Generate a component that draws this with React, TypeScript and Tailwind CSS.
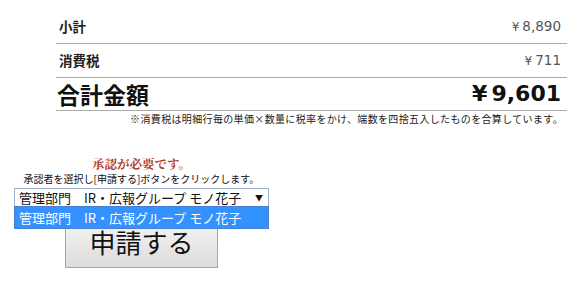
import React from 'react';

const jp = "font-['Noto_Sans_CJK_JP',sans-serif]";
const num = "font-['DejaVu_Sans','Noto_Sans_CJK_JP',sans-serif]";

const Row: React.FC<{ label: string; value: string; h: string }> = ({ label, value, h }) => (
  <div className={`flex items-center justify-between border-b border-[#aaa] ${h}`}>
    <span className={`${jp} pl-[3px] text-[13.5px] font-bold text-[#222]`}>{label}</span>
    <span className={`${num} pr-[6px] text-[13.5px] text-[#555]`}>
      <span className="mr-[3px] text-[12px]">¥</span>
      {value}
    </span>
  </div>
);

export default function App() {
  const approver = '管理部門　IR・広報グループ モノ花子';

  return (
    <div className="h-[289px] w-[572px] overflow-hidden bg-white">
      <div className="ml-[56px] w-[511px] pt-[9px]">
        <Row label="小計" value="8,890" h="h-[35px]" />
        <Row label="消費税" value="711" h="h-[34px]" />
        <div className="flex h-[33px] items-center justify-between border-b border-[#aaa]">
          <span className={`${jp} pl-[1px] text-[23px] font-bold leading-none text-[#111]`}>合計金額</span>
          <span className={`${num} pr-[6px] text-[22px] font-bold leading-none text-[#111]`}>
            <span className="mr-[4px]">¥</span>9,601
          </span>
        </div>
        <p className={`${jp} mt-[1px] pr-[4px] text-right text-[10px] leading-[13px] tracking-[0.35px] text-[#222]`}>
          ※消費税は明細行毎の単価×数量に税率をかけ、端数を四捨五入したものを合算しています。
        </p>
      </div>

      <div className="mt-[32px] flex w-[283px] flex-col items-center">
        <p className={`font-['Noto_Serif_CJK_JP','Noto_Sans_CJK_JP',serif] text-[12.5px] font-bold leading-[15px] text-[#b23a24]`}>
          承認が必要です。
        </p>
        <p className={`${jp} text-[10px] leading-[14px] text-[#111]`}>
          承認者を選択し[申請する]ボタンをクリックします。
        </p>

        <div className="relative mt-[2px] w-[255px]">
          <div className={`${jp} flex h-[19px] items-center justify-between border border-[#9fb0cf] bg-white pl-[4px] pr-[5px] text-[13px] leading-none text-[#111]`}>
            <span>{approver}</span>
            <span className="text-[8px]">▼</span>
          </div>
          <div className={`${jp} absolute left-0 top-[18px] z-10 flex h-[23px] w-[255px] items-center border border-[#4a7fd0] bg-[#3392ff] pl-[4px] text-[13px] leading-none text-white`}>
            {approver}
          </div>
          <div className="mt-[9px] flex justify-center">
            <button
              className={`${jp} h-[52px] w-[153px] border border-[#a6a6a6] bg-gradient-to-b from-[#f7f7f7] to-[#dcdcdc] text-[26px] leading-none text-[#111]`}
            >
              申請する
            </button>
          </div>
        </div>
      </div>
    </div>
  );
}
